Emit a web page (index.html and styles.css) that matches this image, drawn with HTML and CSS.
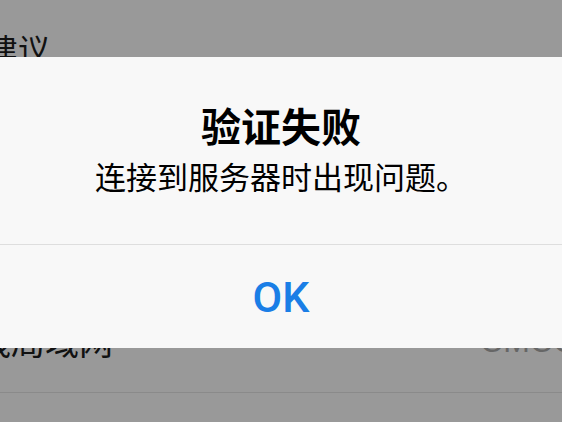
FILE: index.html
```html
<!DOCTYPE html>
<html lang="zh-CN">
<head>
    <meta charset="UTF-8">
    <meta name="viewport" content="width=device-width, initial-scale=1.0">
    <title>验证失败</title>
    <link rel="stylesheet" href="styles.css">
</head>
<body>
    <!-- 设置列表（被遮罩压暗） -->
    <div class="settings-list">
        <div class="section-note">建议</div>
        <div class="setting-row">
            <span class="row-label">无线局域网</span>
            <span class="row-value">CMCC</span>
        </div>
    </div>

    <!-- 弹窗 -->
    <div class="alert">
        <div class="alert-body">
            <div class="alert-title">验证失败</div>
            <div class="alert-message">连接到服务器时出现问题。</div>
        </div>
        <div class="alert-actions">
            <button class="alert-button" type="button">OK</button>
        </div>
    </div>
</body>
</html>
```

FILE: styles.css
```css
body {
    margin: 0;
    width: 562px;
    height: 422px;
    overflow: hidden;
    position: relative;
    background-color: #999999;
    font-family: "Noto Sans CJK SC", "Noto Sans", sans-serif;
    color: #111111;
}

.settings-list {
    padding-top: 28px;
}

.section-note {
    margin-left: -14px;
    font-size: 32px;
    line-height: 40px;
}

.setting-row {
    display: flex;
    justify-content: space-between;
    align-items: center;
    margin-top: 224px;
    padding: 29px 0 31px;
    border-bottom: 1px solid #8a8a8a;
}

.row-label {
    margin-left: -57px;
    font-size: 34px;
    line-height: 40px;
}

.row-value {
    margin-right: -14px;
    font-family: "Liberation Sans", sans-serif;
    font-size: 32px;
    line-height: 40px;
    color: #666666;
}

/* 弹窗盖在列表上面 */
.alert {
    position: absolute;
    top: 57px;
    left: 0;
    right: 0;
    height: 291px;
    background-color: #f8f8f8;
    display: flex;
    flex-direction: column;
}

.alert-body {
    height: 143px;
    padding-top: 44px;
    text-align: center;
}

.alert-title {
    font-size: 40px;
    font-weight: 700;
    line-height: 48px;
    color: #000000;
}

.alert-message {
    margin-top: 8px;
    font-size: 31px;
    line-height: 37px;
    color: #000000;
}

.alert-actions {
    flex: 1;
    display: flex;
    border-top: 1px solid #dedede;
}

.alert-button {
    flex: 1;
    border: none;
    background: none;
    padding: 0;
    font-family: Roboto, "Liberation Sans", sans-serif;
    font-size: 43px;
    font-weight: 500;
    color: #1a7ee6;
}
```
